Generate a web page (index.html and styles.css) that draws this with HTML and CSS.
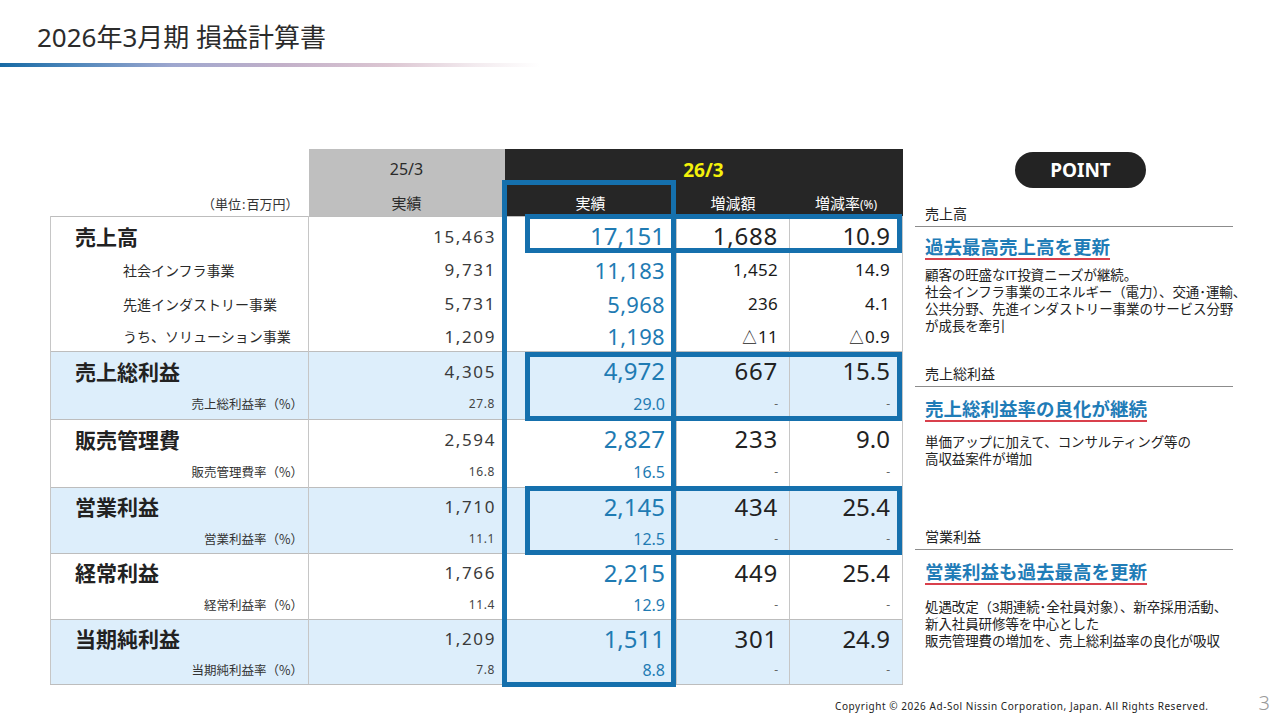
FILE: index.html
```html
<!DOCTYPE html>
<html lang="ja">
<head>
<meta charset="utf-8">
<title>2026年3月期 損益計算書</title>
<link rel="stylesheet" href="styles.css">
</head>
<body>
<div class="slide">
  <header class="head">
    <h1 class="title">2026年3月期 損益計算書</h1>
    <div class="rule"></div>
  </header>

  <main class="content">
    <div class="table-wrap">
      <table class="pl">
        <colgroup>
          <col class="c-label">
          <col class="c-prev">
          <col class="c-act">
          <col class="c-chg">
          <col class="c-rate">
        </colgroup>
        <thead>
          <tr class="h-1">
            <th class="corner"></th>
            <th class="prev-h">25/3</th>
            <th class="cur-h year" colspan="3">26/3</th>
          </tr>
          <tr class="h-2">
            <th class="corner unit">（単位<span class="colon">:</span>百万円）</th>
            <th class="prev-h">実績</th>
            <th class="cur-h">実績</th>
            <th class="cur-h">増減額</th>
            <th class="cur-h">増減率<span class="pct">(%)</span></th>
          </tr>
        </thead>
        <tbody>
          <tr class="r-main r-first grp">
            <td class="lbl-main">売上高</td>
            <td class="prev">15,463</td>
            <td class="act">17,151</td>
            <td class="chg">1,688</td>
            <td class="rate">10.9</td>
          </tr>
          <tr class="r-sub">
            <td class="lbl-sub">社会インフラ事業</td>
            <td class="prev">9,731</td>
            <td class="act act-sub">11,183</td>
            <td class="chg chg-sub">1,452</td>
            <td class="rate chg-sub">14.9</td>
          </tr>
          <tr class="r-sub">
            <td class="lbl-sub">先進インダストリー事業</td>
            <td class="prev">5,731</td>
            <td class="act act-sub">5,968</td>
            <td class="chg chg-sub">236</td>
            <td class="rate chg-sub">4.1</td>
          </tr>
          <tr class="r-sub r-sub-last">
            <td class="lbl-sub">うち、ソリューション事業</td>
            <td class="prev">1,209</td>
            <td class="act act-sub">1,198</td>
            <td class="chg chg-sub">△11</td>
            <td class="rate chg-sub">△0.9</td>
          </tr>

          <tr class="r-main grp hl">
            <td class="lbl-main">売上総利益</td>
            <td class="prev">4,305</td>
            <td class="act">4,972</td>
            <td class="chg">667</td>
            <td class="rate">15.5</td>
          </tr>
          <tr class="r-ratio hl">
            <td class="lbl-ratio">売上総利益率（%）</td>
            <td class="prev prev-ratio">27.8</td>
            <td class="act act-ratio">29.0</td>
            <td class="chg dash">-</td>
            <td class="rate dash">-</td>
          </tr>

          <tr class="r-main grp">
            <td class="lbl-main">販売管理費</td>
            <td class="prev">2,594</td>
            <td class="act">2,827</td>
            <td class="chg">233</td>
            <td class="rate">9.0</td>
          </tr>
          <tr class="r-ratio">
            <td class="lbl-ratio">販売管理費率（%）</td>
            <td class="prev prev-ratio">16.8</td>
            <td class="act act-ratio">16.5</td>
            <td class="chg dash">-</td>
            <td class="rate dash">-</td>
          </tr>

          <tr class="r-main r-main-s grp hl">
            <td class="lbl-main">営業利益</td>
            <td class="prev">1,710</td>
            <td class="act">2,145</td>
            <td class="chg">434</td>
            <td class="rate">25.4</td>
          </tr>
          <tr class="r-ratio r-ratio-s hl">
            <td class="lbl-ratio">営業利益率（%）</td>
            <td class="prev prev-ratio">11.1</td>
            <td class="act act-ratio">12.5</td>
            <td class="chg dash">-</td>
            <td class="rate dash">-</td>
          </tr>

          <tr class="r-main r-main-s grp">
            <td class="lbl-main">経常利益</td>
            <td class="prev">1,766</td>
            <td class="act">2,215</td>
            <td class="chg">449</td>
            <td class="rate">25.4</td>
          </tr>
          <tr class="r-ratio r-ratio-s">
            <td class="lbl-ratio">経常利益率（%）</td>
            <td class="prev prev-ratio">11.4</td>
            <td class="act act-ratio">12.9</td>
            <td class="chg dash">-</td>
            <td class="rate dash">-</td>
          </tr>

          <tr class="r-main r-main-s grp hl">
            <td class="lbl-main">当期純利益</td>
            <td class="prev">1,209</td>
            <td class="act">1,511</td>
            <td class="chg">301</td>
            <td class="rate">24.9</td>
          </tr>
          <tr class="r-ratio r-ratio-l hl r-last">
            <td class="lbl-ratio">当期純利益率（%）</td>
            <td class="prev prev-ratio">7.8</td>
            <td class="act act-ratio">8.8</td>
            <td class="chg dash">-</td>
            <td class="rate dash">-</td>
          </tr>
        </tbody>
      </table>
      <div class="box box-col"></div>
      <div class="box box-sales"></div>
      <div class="box box-gross"></div>
      <div class="box box-op"></div>
    </div>

    <aside class="points">
      <div class="pill">POINT</div>

      <section class="pt pt-1">
        <div class="pt-label">売上高</div>
        <div class="pt-head pt-head-1">過去最高売上高を更新</div>
        <p class="pt-body pt-body-1">顧客の旺盛なIT投資ニーズが継続。<br>社会インフラ事業のエネルギー（電力）、交通･運輸、<br>公共分野、先進インダストリー事業のサービス分野<br>が成長を牽引</p>
      </section>

      <section class="pt pt-2">
        <div class="pt-label">売上総利益</div>
        <div class="pt-head">売上総利益率の良化が継続</div>
        <p class="pt-body pt-body-2">単価アップに加えて、コンサルティング等の<br>高収益案件が増加</p>
      </section>

      <section class="pt pt-3">
        <div class="pt-label">営業利益</div>
        <div class="pt-head">営業利益も過去最高を更新</div>
        <p class="pt-body pt-body-3">処遇改定（3期連続･全社員対象）、新卒採用活動、<br>新入社員研修等を中心とした<br>販売管理費の増加を、売上総利益率の良化が吸収</p>
      </section>
    </aside>
  </main>

  <footer class="foot">
    <span class="copy">Copyright © 2026 Ad-Sol Nissin Corporation, Japan. All Rights Reserved.</span>
    <span class="page">3</span>
  </footer>
</div>
</body>
</html>
```

FILE: styles.css
```css
html, body {
  margin: 0;
  padding: 0;
  background: #ffffff;
}

body {
  font-family: "Noto Sans", "Noto Sans CJK JP", sans-serif;
  color: #222222;
}

.slide {
  width: 1280px;
  height: 720px;
  display: flex;
  flex-direction: column;
  overflow: hidden;
}

/* ---------- header ---------- */
.head {
  display: flex;
  flex-direction: column;
}

.title {
  margin: 0;
  height: 63px;
  box-sizing: border-box;
  padding: 23px 0 0 37px;
  font-family: "Noto Sans", "Noto Sans CJK JP", sans-serif;
  font-weight: 400;
  font-size: 26px;
  line-height: 28px;
  color: #2b2b2b;
}

.rule {
  width: 540px;
  height: 4px;
  background: linear-gradient(to right,
    #1669a4 0%,
    #4f87bb 14%,
    #9ea7cf 32%,
    #c2b0c9 52%,
    #dcc6d2 72%,
    #f3ebef 88%,
    rgba(255, 255, 255, 0) 100%);
}

/* ---------- content ---------- */
.content {
  display: flex;
  margin-top: 82px;
}

.table-wrap {
  position: relative;
  margin-left: 50px;
  width: 852px;
}

.pl {
  width: 852px;
  table-layout: fixed;
  border-collapse: collapse;
}

.c-label { width: 258px; }
.c-prev  { width: 196px; }
.c-act   { width: 172px; }
.c-chg   { width: 113px; }
.c-rate  { width: 113px; }

.pl th,
.pl td {
  padding: 0;
  white-space: nowrap;
}

/* header */
.h-1 { height: 34px; }
.h-2 { height: 33px; }

.pl th {
  font-weight: 400;
  font-family: "Noto Sans", "Noto Sans CJK JP", sans-serif;
  text-align: center;
}

.h-1 th { vertical-align: bottom; padding-bottom: 3px; }
.h-2 th { vertical-align: bottom; padding-bottom: 3px; }

.corner {
  background: #ffffff;
}

.unit {
  text-align: right !important;
  padding-right: 10px !important;
  font-family: "Noto Sans CJK JP", sans-serif !important;
  font-size: 13px;
  color: #333333;
}

.colon {
  font-family: "Noto Sans", sans-serif;
  padding: 0 1px;
}

.prev-h {
  background: #bfbfbf;
  color: #2a2a2a;
  font-size: 15px;
}

.h-1 .prev-h { font-size: 16px; }

.cur-h {
  background: #262626;
  color: #ffffff;
  font-size: 15px;
}

.cur-h.year {
  color: #f4f10a;
  font-weight: 700;
  font-size: 19px;
  padding-bottom: 0;
}

.pct {
  font-size: 12px;
}

/* body */
.pl tbody td {
  border-left: 1px solid #c6c6c6;
  border-right: 1px solid #c6c6c6;
  vertical-align: middle;
  line-height: 1;
}

.pl tbody tr.grp td {
  border-top: 1px solid #bdbdbd;
}

.pl tbody tr.r-last td {
  border-bottom: 1px solid #bdbdbd;
}

.hl td {
  background: #ddeefb;
}

.r-first { height: 39px; }
.r-sub { height: 34px; }
.r-sub-last { height: 32px; }
.r-main { height: 35px; }
.r-ratio { height: 33px; }
.r-main-s { height: 34px; }
.r-ratio-s { height: 32px; }
.r-ratio-l { height: 31px; }

.pl tbody .r-main td { padding-top: 5px; }
.pl tbody .r-ratio td { padding-top: 4px; }
.pl tbody .r-sub td { padding-top: 3px; }

.lbl-main {
  padding-left: 24px !important;
  font-family: "Noto Sans CJK JP", sans-serif;
  font-weight: 700;
  font-size: 21px;
  color: #222222;
}

.lbl-sub {
  padding-left: 72px !important;
  font-family: "Noto Sans CJK JP", sans-serif;
  font-size: 14px;
  color: #2a2a2a;
}

.lbl-ratio {
  text-align: right;
  padding-right: 5px !important;
  font-family: "Noto Sans CJK JP", sans-serif;
  font-size: 12.5px;
  color: #333333;
}

.prev,
.act,
.chg,
.rate {
  text-align: right;
  font-family: "Noto Sans", sans-serif;
}

.prev {
  padding-right: 8px !important;
  font-size: 17px;
  letter-spacing: 1.6px;
  color: #3a3a3a;
}

.prev-ratio {
  font-size: 12px;
  letter-spacing: 0.6px;
  padding-right: 9px !important;
  color: #444444;
}

.act {
  padding-right: 11px !important;
  font-size: 24px;
  color: #1f7bb3;
}

.act-sub {
  font-size: 22px;
  letter-spacing: 0.3px;
}

.act-ratio {
  font-size: 16px;
}

.chg {
  padding-right: 11px !important;
  font-size: 24px;
  letter-spacing: 0.8px;
  color: #222222;
}

.rate {
  padding-right: 12px !important;
  font-size: 24px;
  color: #222222;
}

.chg-sub {
  font-size: 17px;
  font-weight: 400;
  letter-spacing: 0.3px;
  color: #1a1a1a;
}

.dash {
  font-size: 12px;
  letter-spacing: 0;
  color: #666666;
}

/* highlight boxes laid over the table */
.box {
  position: absolute;
  box-sizing: border-box;
  border: 5px solid #1570ad;
  pointer-events: none;
}

.box-col {
  left: 452px;
  top: 31px;
  width: 174px;
  height: 507px;
}

.box-sales {
  left: 475px;
  top: 65px;
  width: 377px;
  height: 39px;
}

.box-gross {
  left: 475px;
  top: 203px;
  width: 377px;
  height: 69px;
}

.box-op {
  left: 475px;
  top: 337px;
  width: 377px;
  height: 69px;
}

/* ---------- points panel ---------- */
.points {
  margin-left: 13px;
  width: 340px;
  display: flex;
  flex-direction: column;
}

.pill {
  margin: 3px 0 0 100px;
  width: 131px;
  height: 36px;
  border-radius: 18px;
  background: #232323;
  color: #ffffff;
  font-family: "Noto Sans", sans-serif;
  font-weight: 700;
  font-size: 19px;
  display: flex;
  align-items: center;
  justify-content: center;
}

.pt-1 { margin-top: 15px; height: 160px; }
.pt-2 { height: 163px; }

.pt-label {
  width: 318px;
  box-sizing: border-box;
  padding: 0 0 3px 10px;
  border-bottom: 1px solid #8c8c8c;
  font-family: "Noto Sans CJK JP", sans-serif;
  font-size: 14px;
  line-height: 20px;
  color: #222222;
}

.pt-head {
  margin-top: 10px;
  padding-left: 10px;
  font-family: "Noto Sans CJK JP", sans-serif;
  font-weight: 700;
  font-size: 18.5px;
  line-height: 22px;
  color: #1f7cb7;
  text-decoration: underline;
  text-decoration-color: #d9404c;
  text-decoration-thickness: 1.5px;
  text-underline-offset: 4px;
}

.pt-head-1 { margin-top: 8px; }

.pt-body {
  margin: 15px 0 0;
  padding-left: 10px;
  font-family: "Liberation Sans", "Noto Sans CJK JP", sans-serif;
  font-size: 13.5px;
  line-height: 17px;
  color: #222222;
  white-space: nowrap;
  letter-spacing: -0.1px;
}

.pt-body-1 { margin-top: 10px; }
.pt-body-3 { margin-top: 17px; }

/* ---------- footer ---------- */
.foot {
  margin-top: auto;
  margin-bottom: 3px;
  height: 28px;
  display: flex;
  align-items: center;
  justify-content: flex-end;
  padding-right: 10px;
}

.copy {
  font-family: "Noto Sans", sans-serif;
  font-size: 10px;
  line-height: 12px;
  letter-spacing: 0.55px;
  color: #222222;
  margin-right: 50px;
  margin-top: 5px;
}

.page {
  font-family: "Noto Sans", sans-serif;
  font-size: 20px;
  line-height: 20px;
  font-weight: 300;
  color: #9a9a9a;
}
```
